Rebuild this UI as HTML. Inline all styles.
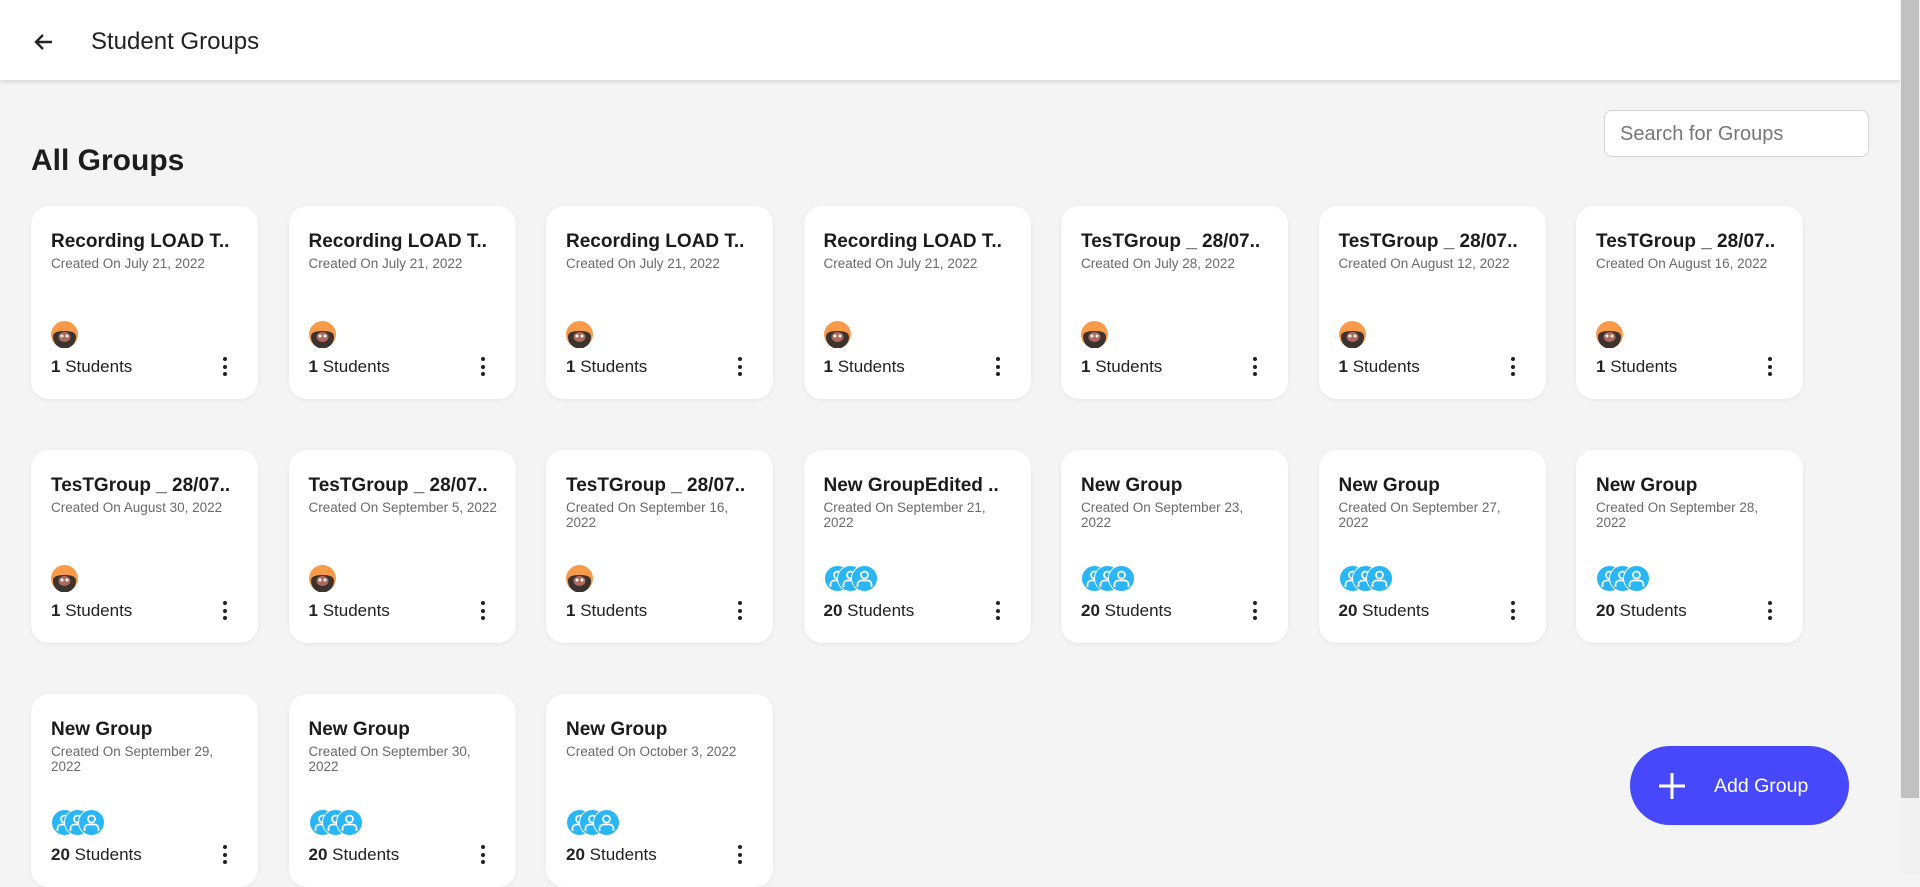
<!DOCTYPE html>
<html><head><meta charset="utf-8"><style>
*{box-sizing:border-box;margin:0;padding:0}
body{width:1920px;height:875px;overflow:hidden;background:#f4f4f4;font-family:"Liberation Sans",Arial,sans-serif;color:#1a1a1a;position:relative}
.hdr{position:absolute;left:0;top:0;width:1900px;height:80px;background:#fff;box-shadow:0 2px 4px rgba(0,0,0,.12)}
.hdr svg{position:absolute;left:32px;top:30px}
.hdr .t{position:absolute;left:91px;top:28px;font-size:24px;color:#222}
h1{position:absolute;left:31px;top:144px;font-size:30px;font-weight:700;color:#1d1d1d}
.search{position:absolute;left:1604px;top:110px;width:265px;height:47px;border:1px solid #d4d4d4;border-radius:8px;background:#fff;font-size:20px;color:#777;padding:12px 15px}
.card{position:absolute;width:227px;height:193px;background:#fff;border-radius:18px;box-shadow:0 1px 4px rgba(0,0,0,.06)}
.card .n{position:absolute;left:20px;top:25px;font-size:19px;font-weight:700;color:#1b1b1b;white-space:nowrap}
.card .d{position:absolute;left:20px;top:50px;width:190px;font-size:13.5px;line-height:15px;color:#6a6a6a}
.card .av{position:absolute;left:20px;top:115px;height:27px}
.card .s{position:absolute;left:20px;top:151px;font-size:17px;color:#222}
.card .s b{font-weight:700}
.card .m{position:absolute;right:31px;top:151px;width:4px}
.card .m i{display:block;width:4px;height:4px;border-radius:2px;background:#222;margin-bottom:3.5px}
.btn{position:absolute;left:1630px;top:746px;width:219px;height:79px;border-radius:40px;background:#4747fb;color:#fff}
.btn .p{position:absolute;left:28px;top:26px}
.btn .l{position:absolute;left:84px;top:29px;font-size:19.5px}
.sb{position:absolute;left:1900px;top:0;width:20px;height:875px;background:#f1f1f1}
.sb i{position:absolute;left:1px;top:0;width:18px;height:798px;background:#c1c1c1}
</style></head><body>
<div class="hdr">
<svg width="24" height="24" viewBox="0 0 24 24"><path d="M20 12H5M11 5l-7 7 7 7" stroke="#222" stroke-width="2.4" fill="none"/></svg>
<div class="t">Student Groups</div>
</div>
<h1>All Groups</h1>
<div class="search">Search for Groups</div>
<svg width="0" height="0" style="position:absolute"><defs>
<g id="o"><circle cx="13.5" cy="13.5" r="13.5" fill="#f79a4a"/><path d="M2 16a11.5 11.5 0 0 0 23 0c0-4-3-6-11.5-6S2 12 2 16z" fill="#3a3330"/><ellipse cx="13.5" cy="16" rx="6" ry="5" fill="#b06a5a"/><circle cx="11" cy="15" r="1.5" fill="#fff"/><circle cx="16" cy="15" r="1.5" fill="#fff"/></g>
<g id="b"><circle cx="13.5" cy="13.5" r="13" fill="#29b6f6" stroke="#fff" stroke-width="1"/><circle cx="13.5" cy="10" r="3.5" fill="none" stroke="#fff" stroke-width="1.8"/><path d="M6.5 22v-2.5a4 4 0 0 1 4-4h6a4 4 0 0 1 4 4V22" fill="none" stroke="#fff" stroke-width="1.8"/></g>
</defs></svg>
<div id="cards"></div>
<div class="btn"><svg class="p" width="28" height="28"><path d="M14 1v26M1 14h26" stroke="#fff" stroke-width="3"/></svg><span class="l">Add Group</span></div>
<div class="sb"><i></i></div>
<script>
var d=[["Recording LOAD T..","July 21, 2022",1],["Recording LOAD T..","July 21, 2022",1],["Recording LOAD T..","July 21, 2022",1],["Recording LOAD T..","July 21, 2022",1],["TesTGroup _ 28/07..","July 28, 2022",1],["TesTGroup _ 28/07..","August 12, 2022",1],["TesTGroup _ 28/07..","August 16, 2022",1],
["TesTGroup _ 28/07..","August 30, 2022",1],["TesTGroup _ 28/07..","September 5, 2022",1],["TesTGroup _ 28/07..","September 16, 2022",1],["New GroupEdited ..","September 21, 2022",20],["New Group","September 23, 2022",20],["New Group","September 27, 2022",20],["New Group","September 28, 2022",20],
["New Group","September 29, 2022",20],["New Group","September 30, 2022",20],["New Group","October 3, 2022",20]];
var h="";d.forEach(function(c,i){var x=31+(i%7)*257.5,y=206+Math.floor(i/7)*244;
var av=c[2]==1?'<svg class="av" width="27" height="27"><use href="#o"/></svg>':'<svg class="av" width="56" height="27"><use href="#b"/><use href="#b" x="13"/><use href="#b" x="27"/></svg>';
h+='<div class="card" style="left:'+x+'px;top:'+y+'px"><div class="n">'+c[0]+'</div><div class="d">Created On '+c[1]+'</div>'+av+'<div class="s"><b>'+c[2]+'</b> Students</div><div class="m"><i></i><i></i><i></i></div></div>';});
document.getElementById("cards").innerHTML=h;
</script>
</body></html>
